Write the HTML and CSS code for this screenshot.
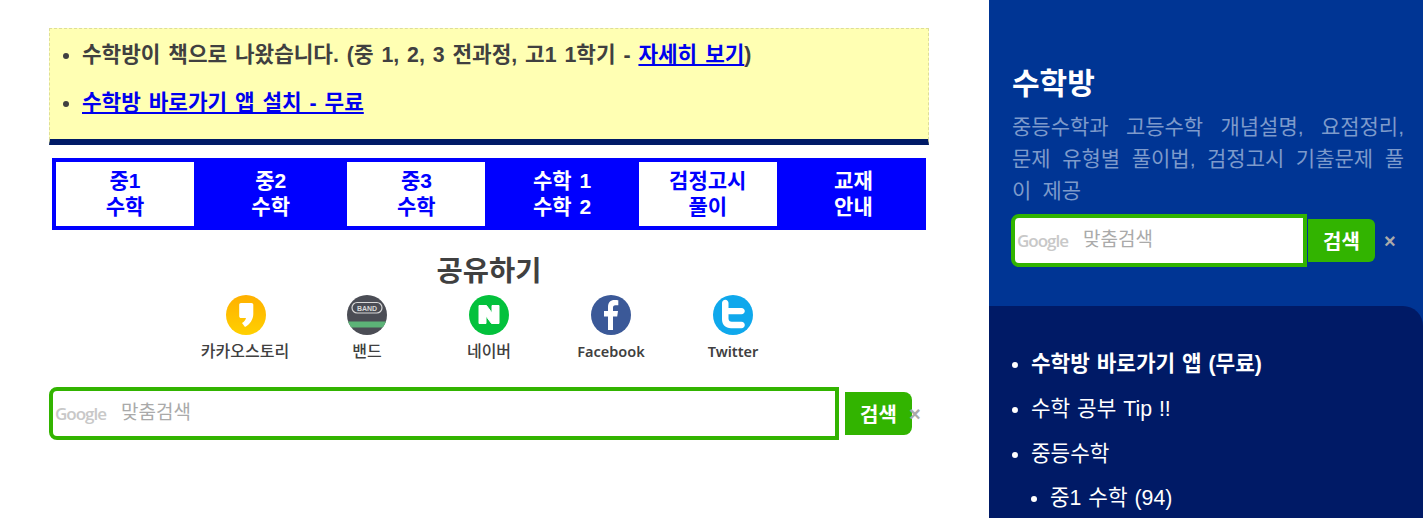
FILE: index.html
```html
<!DOCTYPE html>
<html lang="ko">
<head>
<meta charset="utf-8">
<title>수학방</title>
<link rel="stylesheet" href="styles.css">
</head>
<body>
<div class="page">
  <main class="main">
    <section class="notice">
      <ul>
        <li>수학방이 책으로 나왔습니다. (중 1, 2, 3 전과정, 고1 1학기 - <a href="#">자세히 보기</a>)</li>
        <li><a href="#">수학방 바로가기 앱 설치 - 무료</a></li>
      </ul>
    </section>
    <nav class="grades">
      <a class="grade light" href="#">중1<br>수학</a>
      <a class="grade dark" href="#">중2<br>수학</a>
      <a class="grade light" href="#">중3<br>수학</a>
      <a class="grade dark" href="#">수학 1<br>수학 2</a>
      <a class="grade light" href="#">검정고시<br>풀이</a>
      <a class="grade dark" href="#">교재<br>안내</a>
    </nav>
    <h2 class="share-title">공유하기</h2>
    <div class="share">
      <a class="share-item kakao" href="#">
        <svg class="share-icon" viewBox="0 0 40 40"><defs><linearGradient id="kakao" x1="0" y1="0" x2="0" y2="1"><stop offset="0" stop-color="#ffb000"/><stop offset="1" stop-color="#ffd000"/></linearGradient></defs><circle cx="20" cy="20" r="20" fill="url(#kakao)"/><path d="M15 8h10.500c1 0 1.800.8 1.800 1.800V19c0 5.500-3.500 10.500-8.300 13l-3-4c2.300-1.300 3.500-2.800 4-5h-5c-1 0-1.800-.8-1.800-1.800V9.800c0-1 .8-1.800 1.800-1.800z" fill="#fff"/></svg>
        <span>카카오스토리</span>
      </a>
      <a class="share-item" href="#">
        <svg class="share-icon" viewBox="0 0 40 40"><defs><clipPath id="bandclip"><circle cx="20" cy="20" r="20"/></clipPath></defs><circle cx="20" cy="20" r="20" fill="#4b4d55"/><rect x="0" y="26.500" width="40" height="6" fill="#5cb377" clip-path="url(#bandclip)"/><rect x="5" y="7.500" width="30" height="10.500" rx="5.200" fill="none" stroke="#d8d8d8" stroke-width="1.200"/><text x="20" y="15.700" text-anchor="middle" class="band-text">BAND</text></svg>
        <span>밴드</span>
      </a>
      <a class="share-item" href="#">
        <svg class="share-icon" viewBox="0 0 40 40"><circle cx="20" cy="20" r="20" fill="#03c13c"/><path d="M10 10.500h7.500l5.500 7.500v-7.500h7v18h-7.500l-5.500-7.500v7.500h-7z" fill="#fff" stroke="#fff" stroke-width="1" stroke-linejoin="round"/></svg>
        <span>네이버</span>
      </a>
      <a class="share-item" href="#">
        <svg class="share-icon" viewBox="0 0 40 40"><circle cx="20" cy="20" r="20" fill="#3b5998"/><path d="M17 35V21.500h-4v-5.500h4v-4c0-4.500 2.500-7 6.500-7 1.800 0 3 .1 3.800.3v5h-2.800c-2 0-2.500 1-2.500 2.500V16h5l-.8 5.500h-4.200V35z" fill="#fff"/></svg>
        <span class="latin">Facebook</span>
      </a>
      <a class="share-item" href="#">
        <svg class="share-icon" viewBox="0 0 40 40"><circle cx="20" cy="20" r="20" fill="#0fa8ec"/><path d="M9 8c0-1.800 1.500-3.200 3.300-3.200 1.700 0 3.200 1.400 3.200 3.200v5h13c1.900 0 3.300 1.400 3.300 3.100 0 1.800-1.400 3.200-3.300 3.200h-13v4.200c0 2 1.300 3.300 3.300 3.300h9.700c1.900 0 3.300 1.400 3.300 3.200s-1.400 3.200-3.300 3.200H18c-5.500 0-9-3.500-9-9z" fill="#fff"/></svg>
        <span class="latin">Twitter</span>
      </a>
    </div>
    <form class="search main-search">
      <div class="search-box"><span class="google">Google</span><span class="placeholder">맞춤검색</span></div>
      <button class="search-btn" type="button">검색</button>
      <span class="clear">×</span>
    </form>
  </main>
  <aside class="side">
    <div class="side-top">
      <h1 class="side-title">수학방</h1>
      <p class="side-desc">중등수학과 고등수학 개념설명, 요점정리, 문제 유형별 풀이법, 검정고시 기출문제 풀이 제공</p>
      <form class="search side-search">
        <div class="search-box"><span class="google">Google</span><span class="placeholder">맞춤검색</span></div>
        <button class="search-btn" type="button">검색</button>
        <span class="clear">×</span>
      </form>
    </div>
    <div class="side-menu">
      <ul>
        <li class="strong">수학방 바로가기 앱 (무료)</li>
        <li>수학 공부 Tip !!</li>
        <li>중등수학
          <ul>
            <li>중1 수학 (94)</li>
          </ul>
        </li>
      </ul>
    </div>
  </aside>
</div>
</body>
</html>
```
FILE: styles.css
```css
* { box-sizing: border-box; }
html, body { margin: 0; height: 518px; overflow: hidden; background: #fff; }
body { font-family: "Liberation Sans", "Noto Sans CJK KR", sans-serif; color: #404040; }
a { color: #0000ee; }
.page { display: flex; height: 518px; overflow: hidden; }
.main { width: 989px; padding: 28px 60px 0 49px; flex: none; }
.notice { height: 117px; background: #ffffb3; border: 1px dashed #dddd99; border-bottom: 6px solid #001a66; }
.notice ul { margin: 0; padding: 2px 0 0 32px; font-size: 21.300px; font-weight: 700; word-spacing: 2px; }
.notice li { height: 48px; line-height: 48px; }
.grades { display: grid; grid-template-columns: repeat(6, 138px); gap: 7.700px; margin: 13px 3px 0; padding: 4px; background: #0000ff; overflow: hidden; }
.grade { height: 64px; display: block; text-align: center; font-size: 21px; font-weight: 700; line-height: 26px; padding-top: 6px; text-decoration: none; word-spacing: 2px; }
.grade.light { background: #fff; color: #0000ff; }
.grade.dark { background: #0000ff; color: #fff; }
.share-title { margin: 21px 0 0; text-align: center; font-size: 28.500px; line-height: 40px; color: #404040; }
.share { display: flex; justify-content: center; margin: 4px 0 0; }
.share-item { width: 122px; display: flex; flex-direction: column; align-items: center; text-decoration: none; color: #404040; font-size: 16px; font-weight: 500; }
.share-item span { margin-top: 6px; line-height: 22px; white-space: nowrap; }
.share-item .latin { margin-top: 5px; font: 600 14.500px "Noto Sans", sans-serif; line-height: 22px; }
.kakao .share-icon { margin-left: 2px; }
.share-icon { width: 40px; height: 40px; display: block; }
.band-text { font: 700 7px "Liberation Sans", sans-serif; fill: #d8d8d8; }
.search { display: flex; align-items: center; }
.main-search { margin-top: 24px; }
.search-box { height: 53px; border: 4px solid #32b400; border-radius: 8px 0 0 8px; background: #fff; display: flex; align-items: center; padding: 0 0 0 2px; flex: none; }
.main-search .search-box { width: 790px; }
.side-search .search-box { width: 296px; }
.google { font: 600 17px "Open Sans", sans-serif; color: #c8c8c8; letter-spacing: -1px; width: 66px; flex: none; }
.placeholder { font-size: 19px; color: #aaa; margin-top: -6px; }
.search-btn { height: 43px; width: 67px; margin-left: 6px; border: 0; padding: 0; background: #32b400; color: #fff; font: 700 20px "Liberation Sans", "Noto Sans CJK KR", sans-serif; border-radius: 0 8px 8px 0; flex: none; }
.side-search .search-btn { margin-left: 1px; border-radius: 0 6px 6px 0; }
.clear { color: #aaa; font-size: 20px; font-weight: 700; margin-left: -3px; line-height: 1; }
.side-search .clear { margin-left: 9px; }
.side { flex: 1; background: #003594; display: flex; flex-direction: column; min-width: 0; }
.side-top { flex: none; height: 306px; padding: 66px 19px 0 23px; }
.side-title { margin: 0; color: #fff; font-size: 30px; line-height: 36px; font-weight: 700; }
.side-desc { margin: 9px 0 0; color: #7d9acb; font-size: 21px; line-height: 32px; text-align: justify; word-spacing: 5.300px; }
.side-search { margin-top: 7px; margin-left: -1px; }
.side-menu { flex: 1; background: #001a66; border-top-right-radius: 20px; padding: 44px 0 0 42px; color: #fff; font-size: 21.300px; word-spacing: 1px; }
.side-menu ul { margin: 0; padding: 0; }
.side-menu > ul > li { margin-bottom: 16px; }
.side-menu li { line-height: 29px; }
.side-menu li ul { padding-left: 19px; margin-top: 15px; list-style: disc; }
.strong { font-weight: 700; }
```
